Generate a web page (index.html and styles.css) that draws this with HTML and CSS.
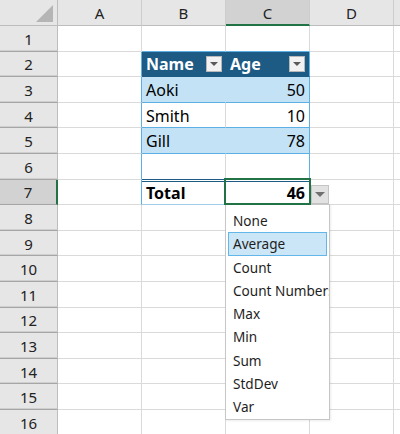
FILE: index.html
```html
<!DOCTYPE html>
<html>
<head>
<meta charset="utf-8">
<link rel="stylesheet" href="styles.css">
</head>
<body>
<div class="sheet">
  <div class="row hdr">
    <div class="rh corner"><svg width="17" height="17" viewBox="0 0 17 17"><polygon points="0,17 17,17 17,0" fill="#b5b5b5"/></svg></div>
    <div class="c">A</div>
    <div class="c">B</div>
    <div class="c sel">C</div>
    <div class="c">D</div>
    <div class="c last"></div>
  </div>
  <div class="row">
    <div class="rh">1</div>
    <div class="c"></div>
    <div class="c tt"></div>
    <div class="c tt"></div>
    <div class="c"></div>
    <div class="c last"></div>
  </div>
  <div class="row">
    <div class="rh">2</div>
    <div class="c tl"></div>
    <div class="c th">Name<span class="fbtn"><i class="tri"></i></span></div>
    <div class="c th tr">Age<span class="fbtn"><i class="tri"></i></span></div>
    <div class="c"></div>
    <div class="c last"></div>
  </div>
  <div class="row">
    <div class="rh">3</div>
    <div class="c tl"></div>
    <div class="c band">Aoki</div>
    <div class="c band tr num">50</div>
    <div class="c"></div>
    <div class="c last"></div>
  </div>
  <div class="row">
    <div class="rh">4</div>
    <div class="c tl"></div>
    <div class="c tb">Smith</div>
    <div class="c tb tr num">10</div>
    <div class="c"></div>
    <div class="c last"></div>
  </div>
  <div class="row">
    <div class="rh">5</div>
    <div class="c tl"></div>
    <div class="c band">Gill</div>
    <div class="c band tr num">78</div>
    <div class="c"></div>
    <div class="c last"></div>
  </div>
  <div class="row">
    <div class="rh">6</div>
    <div class="c tl"></div>
    <div class="c dbl"></div>
    <div class="c dbl tr"></div>
    <div class="c"></div>
    <div class="c last"></div>
  </div>
  <div class="row">
    <div class="rh sel">7</div>
    <div class="c tl"></div>
    <div class="c tot">Total</div>
    <div class="c tot tr num">46<span class="selbox"></span></div>
    <div class="c"></div>
    <div class="c last"></div>
  </div>
  <div class="row"><div class="rh">8</div><div class="c"></div><div class="c"></div><div class="c"></div><div class="c"></div><div class="c last"></div></div>
  <div class="row"><div class="rh">9</div><div class="c"></div><div class="c"></div><div class="c"></div><div class="c"></div><div class="c last"></div></div>
  <div class="row"><div class="rh">10</div><div class="c"></div><div class="c"></div><div class="c"></div><div class="c"></div><div class="c last"></div></div>
  <div class="row"><div class="rh">11</div><div class="c"></div><div class="c"></div><div class="c"></div><div class="c"></div><div class="c last"></div></div>
  <div class="row"><div class="rh">12</div><div class="c"></div><div class="c"></div><div class="c"></div><div class="c"></div><div class="c last"></div></div>
  <div class="row"><div class="rh">13</div><div class="c"></div><div class="c"></div><div class="c"></div><div class="c"></div><div class="c last"></div></div>
  <div class="row"><div class="rh">14</div><div class="c"></div><div class="c"></div><div class="c"></div><div class="c"></div><div class="c last"></div></div>
  <div class="row"><div class="rh">15</div><div class="c"></div><div class="c"></div><div class="c"></div><div class="c"></div><div class="c last"></div></div>
  <div class="row"><div class="rh">16</div><div class="c"></div><div class="c"></div><div class="c"></div><div class="c"></div><div class="c last"></div></div>

  <div class="ddbtn"><i class="tri"></i></div>
  <ul class="list">
    <li>None</li>
    <li class="hi">Average</li>
    <li>Count</li>
    <li>Count Numbers</li>
    <li>Max</li>
    <li>Min</li>
    <li>Sum</li>
    <li>StdDev</li>
    <li>Var</li>
  </ul>
</div>
</body>
</html>
```
FILE: styles.css
```css
html, body {
  margin: 0;
  padding: 0;
  background: #ffffff;
  overflow: hidden;
}
body {
  font-family: "Noto Sans", "Open Sans", sans-serif;
  color: #000;
}
.sheet {
  position: relative;
  width: 400px;
  height: 434px;
  overflow: hidden;
}
.row {
  display: flex;
  height: 25.6px;
}
.row.hdr {
  height: 26px;
}
.rh {
  width: 58px;
  flex: none;
  box-sizing: border-box;
  background: #e6e6e6;
  border-right: 1px solid #bdbdbd;
  border-bottom: 1px solid #a6a6a6;
  box-shadow: inset 0 -1px 0 #cfcfcf;
  display: flex;
  align-items: center;
  justify-content: center;
  font-size: 15px;
  color: #222;
  padding-top: 1px;
}
.rh.corner {
  justify-content: flex-end;
  align-items: flex-end;
  padding: 0 4px 3px 0;
  border-bottom-color: #bdbdbd;
  box-shadow: none;
}
.rh.corner svg {
  display: block;
}
.rh.sel {
  background: #d2d2d2;
  border-right: 2px solid #217346;
}
.c {
  width: 84px;
  flex: none;
  box-sizing: border-box;
  border-right: 1px solid #dadada;
  border-bottom: 1px solid #dadada;
  display: flex;
  align-items: center;
  padding: 1px 4px 0 4px;
  font-size: 16px;
  white-space: nowrap;
  position: relative;
}
.c.last {
  flex: 1;
}
.hdr .c {
  background: #e6e6e6;
  border-right-color: #cdcdcd;
  border-bottom-color: #bdbdbd;
  justify-content: center;
  font-size: 15px;
  color: #222;
}
.hdr .c.sel {
  background: #d2d2d2;
  border-bottom: 2px solid #217346;
}

/* table */
.c.tt {
  border-bottom-color: #5cb0e4;
}
.c.tl {
  border-right-color: #5cb0e4;
}
.c.tr {
  border-right-color: #5cb0e4;
}
.c.th {
  background: #1d5a84;
  color: #fff;
  font-weight: bold;
  border-right-color: #1d5a84;
  border-bottom-color: #1d5a84;
  padding: 1px 3px 0 4px;
}
.c.th.tr {
  border-right-color: #5cb0e4;
  padding-right: 4px;
}
.fbtn {
  margin-left: auto;
  width: 16px;
  height: 16px;
  box-sizing: border-box;
  background: #f2f2f2;
  border: 1px solid #b8b8b8;
  display: flex;
  align-items: center;
  justify-content: center;
}
.tri {
  display: block;
  width: 0;
  height: 0;
  border-left: 4px solid transparent;
  border-right: 4px solid transparent;
  border-top: 4px solid #5a5a5a;
}
.c.band {
  background: #c4e2f5;
  border-right-color: #c4e2f5;
  border-bottom-color: #5cb0e4;
}
.c.band.tr {
  border-right-color: #5cb0e4;
}
.c.tb {
  border-bottom-color: #5cb0e4;
}
.c.tb.tr {
  border-right-color: #5cb0e4;
}
.c.dbl {
  border-bottom-color: #1d5a84;
}
.c.dbl.tr {
  border-right-color: #5cb0e4;
}
.c.tot {
  font-weight: bold;
  border-bottom-color: #9fcdea;
  box-shadow: inset 0 1px 0 #ffffff, inset 0 2px 0 #1d5a84;
  padding-top: 2px;
}
.c.tot.tr {
  border-right-color: #5cb0e4;
}
.c.num {
  justify-content: flex-end;
}
.selbox {
  position: absolute;
  top: -2px;
  left: -2px;
  right: -2px;
  bottom: -1px;
  border: 2px solid #217346;
  z-index: 3;
}
.ddbtn {
  position: absolute;
  left: 311px;
  top: 185px;
  width: 18px;
  height: 19px;
  box-sizing: border-box;
  background: #e2e2e2;
  border: 1px solid #c4c4c4;
  display: flex;
  align-items: center;
  justify-content: center;
  z-index: 2;
}
.ddbtn .tri {
  border-left-width: 5px;
  border-right-width: 5px;
  border-top: 5px solid #707070;
}
.list {
  position: absolute;
  left: 225px;
  top: 204px;
  width: 105px;
  height: 216px;
  box-sizing: border-box;
  margin: 0;
  padding: 4px 0 0 0;
  list-style: none;
  background: #fff;
  border: 1px solid #c6c6c6;
  box-shadow: 1px 1px 2px rgba(0,0,0,0.08);
  overflow: hidden;
  z-index: 2;
}
.list li {
  height: 23.25px;
  box-sizing: border-box;
  margin: 0 2px;
  border: 1px solid transparent;
  padding: 0 0 0 4px;
  display: flex;
  align-items: center;
  font-size: 13.6px;
  color: #1e1e1e;
  white-space: nowrap;
}
.list li.hi {
  background: #cbe6f6;
  border-color: #62b6e8;
}
```
